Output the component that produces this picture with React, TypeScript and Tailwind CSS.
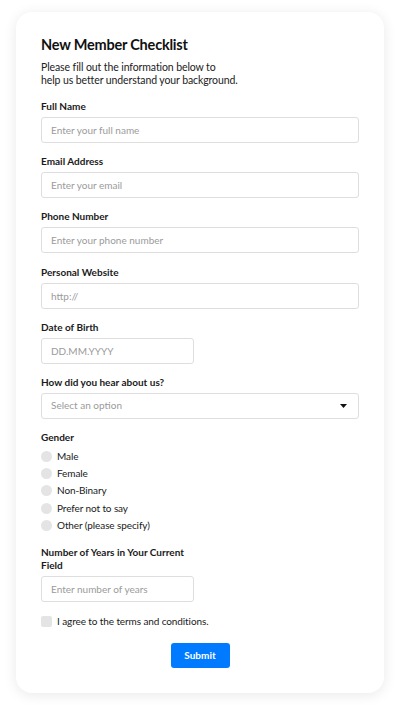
export default function App() {
  const fields = [
    { label: "Full Name", placeholder: "Enter your full name" },
    { label: "Email Address", placeholder: "Enter your email" },
    { label: "Phone Number", placeholder: "Enter your phone number" },
    { label: "Personal Website", placeholder: "http://" },
  ];
  const genders = ["Male", "Female", "Non-Binary", "Prefer not to say", "Other (please specify)"];

  return (
    <div
      className="min-h-screen bg-white px-4 pt-3 pb-[13px] text-[#1a1a1a]"
      style={{ fontFamily: 'Lato, "Noto Sans", sans-serif' }}
    >
      <div className="rounded-2xl bg-white px-[25px] pt-[23px] pb-[25px] shadow-[0_2px_14px_rgba(0,0,0,0.09)]">
        <h1 className="text-[14.5px] font-bold leading-5 tracking-[-0.2px] text-[#111]">New Member Checklist</h1>
        <p className="mt-[6px] text-[10.5px] leading-[13px] tracking-[-0.1px] text-[#222]">
          Please fill out the information below to
          <br />
          help us better understand your background.
        </p>

        <div className="mt-3 flex flex-col gap-[11.2px]">
          {fields.map((f) => (
            <div key={f.label}>
              <label className="block text-[10px] font-bold leading-[14px]">{f.label}</label>
              <input
                type="text"
                placeholder={f.placeholder}
                className="mt-1 block h-[26px] w-full rounded-[3px] border border-[#dedede] px-[9px] text-[10px] placeholder:text-[#9b9b9b]"
              />
            </div>
          ))}

          <div className="grid grid-cols-2 gap-3">
            <div>
              <label className="block text-[10px] font-bold leading-[14px]">Date of Birth</label>
              <input
                type="text"
                placeholder="DD.MM.YYYY"
                className="mt-1 block h-[26px] w-full rounded-[3px] border border-[#dedede] px-[9px] text-[10px] placeholder:text-[#9b9b9b]"
              />
            </div>
          </div>

          <div>
            <label className="block text-[10px] font-bold leading-[14px]">How did you hear about us?</label>
            <div className="mt-1 flex h-[26px] w-full items-center justify-between rounded-[3px] border border-[#dedede] pl-[9px] pr-[11px] text-[10px] text-[#9b9b9b]">
              <span>Select an option</span>
              <svg width="7" height="4" viewBox="0 0 7 4">
                <path d="M0 0h7L3.5 4z" fill="#111" />
              </svg>
            </div>
          </div>

          <div>
            <label className="block text-[10px] font-bold leading-[14px]">Gender</label>
            <div className="mt-[3.5px] flex flex-col">
              {genders.map((g) => (
                <div key={g} className="flex h-[17.3px] items-center gap-[5px] text-[10px] tracking-[-0.1px]">
                  <span className="h-[11px] w-[11px] rounded-full bg-[#e4e4e4]" />
                  <span>{g}</span>
                </div>
              ))}
            </div>
          </div>
        </div>

        <div className="mt-[12px] grid grid-cols-2 gap-3">
          <div>
            <label className="block text-[10px] font-bold leading-[13px]">
              Number of Years in Your Current Field
            </label>
            <input
              type="text"
              placeholder="Enter number of years"
              className="mt-1 block h-[26px] w-full rounded-[3px] border border-[#dedede] px-[9px] text-[10px] placeholder:text-[#9b9b9b]"
            />
          </div>
        </div>

        <div className="mt-[11px] flex h-[17px] items-center gap-[5px] text-[10px] tracking-[-0.1px]">
          <span className="h-[11px] w-[11px] rounded-[2px] bg-[#e4e4e4]" />
          <span>I agree to the terms and conditions.</span>
        </div>

        <div className="mt-[13px] flex justify-center">
          <button className="h-[25px] w-[59px] rounded-[3px] bg-[#007bff] text-[10px] font-bold text-white">
            Submit
          </button>
        </div>
      </div>
    </div>
  );
}
